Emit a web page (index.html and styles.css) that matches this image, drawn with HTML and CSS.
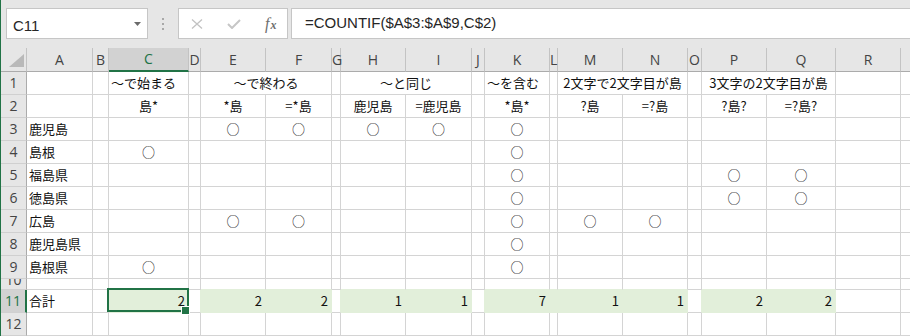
FILE: index.html
```html
<!DOCTYPE html>
<html lang="ja">

<head>
    <meta charset="UTF-8">
    <meta name="viewport" content="width=device-width, initial-scale=1.0">
    <title>COUNTIF</title>
    <link rel="stylesheet" href="styles.css">
</head>

<body>
    <div class="app">
        <!-- 数式バー -->
        <div class="fbar">
            <div class="namebox">
                <span>C11</span>
                <svg class="drop" width="7" height="4" viewBox="0 0 7 4"><polygon points="0,0 7,0 3.5,4" /></svg>
            </div>
            <svg class="grip" width="3" height="12" viewBox="0 0 3 12">
                <rect x="0" y="0" width="2" height="2" />
                <rect x="0" y="5" width="2" height="2" />
                <rect x="0" y="10" width="2" height="2" />
            </svg>
            <div class="fxbox">
                <svg class="btn-x" width="12" height="10" viewBox="0 0 12 10">
                    <path d="M1 0.5 L11 9.5 M11 0.5 L1 9.5" />
                </svg>
                <svg class="btn-ok" width="14" height="10" viewBox="0 0 14 10">
                    <polyline points="1,5 5,9 13,1" />
                </svg>
                <span class="fx"><i>f</i><i class="sx">x</i></span>
            </div>
            <div class="formula">=COUNTIF($A$3:$A$9,C$2)</div>
        </div>

        <!-- シート -->
        <table class="sheet">
            <colgroup>
                <col class="w-rh"><col class="w-a"><col class="w-b"><col class="w-c"><col class="w-d">
                <col class="w-e"><col class="w-f"><col class="w-g"><col class="w-h"><col class="w-i">
                <col class="w-j"><col class="w-k"><col class="w-l"><col class="w-m"><col class="w-n">
                <col class="w-o"><col class="w-p"><col class="w-q"><col class="w-r"><col class="w-s">
            </colgroup>
            <thead>
                <tr>
                    <th class="corner"><svg width="26" height="22" viewBox="0 0 26 22"><polygon points="23,5 23,18 8,18" /></svg></th>
                    <th>A</th><th>B</th><th class="selc">C</th><th>D</th><th>E</th><th>F</th><th>G</th><th>H</th><th>I</th>
                    <th>J</th><th>K</th><th>L</th><th>M</th><th>N</th><th>O</th><th>P</th><th>Q</th><th>R</th><th></th>
                </tr>
            </thead>
            <tbody>
                <tr><th class="rh">1</th><td></td><td></td><td>～で始まる</td><td></td><td colspan="2" class="ctr">～で終わる</td><td></td><td colspan="2" class="ctr">～と同じ</td><td></td><td>～を含む</td><td></td><td colspan="2" class="ctr">2文字で2文字目が島</td><td></td><td colspan="2" class="ctr">3文字の2文字目が島</td><td></td><td></td></tr>
                <tr><th class="rh">2</th><td></td><td></td><td class="ctr">島*</td><td></td><td class="ctr">*島</td><td class="ctr">=*島</td><td></td><td class="ctr">鹿児島</td><td class="ctr">=鹿児島</td><td></td><td class="ctr">*島*</td><td></td><td class="ctr">?島</td><td class="ctr">=?島</td><td></td><td class="ctr">?島?</td><td class="ctr">=?島?</td><td></td><td></td></tr>
                <tr><th class="rh">3</th><td>鹿児島</td><td></td><td></td><td></td><td class="mk">○</td><td class="mk">○</td><td></td><td class="mk">○</td><td class="mk">○</td><td></td><td class="mk">○</td><td></td><td></td><td></td><td></td><td></td><td></td><td></td><td></td></tr>
                <tr><th class="rh">4</th><td>島根</td><td></td><td class="mk">○</td><td></td><td></td><td></td><td></td><td></td><td></td><td></td><td class="mk">○</td><td></td><td></td><td></td><td></td><td></td><td></td><td></td><td></td></tr>
                <tr><th class="rh">5</th><td>福島県</td><td></td><td></td><td></td><td></td><td></td><td></td><td></td><td></td><td></td><td class="mk">○</td><td></td><td></td><td></td><td></td><td class="mk">○</td><td class="mk">○</td><td></td><td></td></tr>
                <tr><th class="rh">6</th><td>徳島県</td><td></td><td></td><td></td><td></td><td></td><td></td><td></td><td></td><td></td><td class="mk">○</td><td></td><td></td><td></td><td></td><td class="mk">○</td><td class="mk">○</td><td></td><td></td></tr>
                <tr><th class="rh">7</th><td>広島</td><td></td><td></td><td></td><td class="mk">○</td><td class="mk">○</td><td></td><td></td><td></td><td></td><td class="mk">○</td><td></td><td class="mk">○</td><td class="mk">○</td><td></td><td></td><td></td><td></td><td></td></tr>
                <tr><th class="rh">8</th><td>鹿児島県</td><td></td><td></td><td></td><td></td><td></td><td></td><td></td><td></td><td></td><td class="mk">○</td><td></td><td></td><td></td><td></td><td></td><td></td><td></td><td></td></tr>
                <tr><th class="rh">9</th><td>島根県</td><td></td><td class="mk">○</td><td></td><td></td><td></td><td></td><td></td><td></td><td></td><td class="mk">○</td><td></td><td></td><td></td><td></td><td></td><td></td><td></td><td></td></tr>
                <tr class="short"><th class="rh"><div class="cut"><span>10</span></div></th><td></td><td></td><td></td><td></td><td class="ab"></td><td class="ab"></td><td></td><td class="ab"></td><td class="ab"></td><td></td><td class="ab"></td><td class="ab"></td><td class="ab"></td><td class="ab"></td><td></td><td class="ab"></td><td class="ab"></td><td></td><td></td></tr>
                <tr><th class="rh selr">11</th><td>合計</td><td></td><td class="num fill sel">2</td><td class="gap"></td><td class="num fill">2</td><td class="num fill">2</td><td class="gap"></td><td class="num fill">1</td><td class="num fill">1</td><td class="gap"></td><td class="num fill">7</td><td class="fill"></td><td class="num fill">1</td><td class="num fill">1</td><td class="gap"></td><td class="num fill">2</td><td class="num fill">2</td><td></td><td></td></tr>
                <tr><th class="rh">12</th><td></td><td></td><td></td><td></td><td></td><td></td><td></td><td></td><td></td><td></td><td></td><td></td><td></td><td></td><td></td><td></td><td></td><td></td><td></td></tr>
                <tr><th class="rh">13</th><td></td><td></td><td></td><td></td><td></td><td></td><td></td><td></td><td></td><td></td><td></td><td></td><td></td><td></td><td></td><td></td><td></td><td></td><td></td></tr>
            </tbody>
        </table>
    </div>
</body>

</html>
```

FILE: styles.css
```css
* {
    box-sizing: border-box;
}

body {
    margin: 0;
    overflow: hidden;
    background: #ffffff;
    font-family: "Liberation Sans", Arial, sans-serif;
}

.app {
    height: 336px;
    overflow: hidden;
    border-left: 1px solid #217346;
}

/* 数式バー */
.fbar {
    display: flex;
    align-items: flex-start;
    height: 48px;
    padding: 8px 0 0 5px;
    background: #e6e6e6;
}

.namebox {
    display: flex;
    align-items: center;
    justify-content: space-between;
    width: 142px;
    height: 31px;
    padding: 3px 6px 0 6px;
    background: #ffffff;
    border: 1px solid #c6c6c6;
    font-size: 15px;
    color: #262626;
}

.drop {
    margin-top: -2px;
    fill: #6b6b6b;
}

.grip {
    margin: 10px 13px 0 14px;
    fill: #a8a8a8;
}

.fxbox {
    display: flex;
    align-items: center;
    width: 110px;
    height: 31px;
    padding-left: 12px;
    background: #ffffff;
    border: 1px solid #c6c6c6;
}

.btn-x {
    stroke: #c2c2c2;
    stroke-width: 1.3;
    fill: none;
}

.btn-ok {
    margin-left: 24px;
    stroke: #c6c6c6;
    stroke-width: 2;
    fill: none;
}

.fx {
    margin-left: 24px;
    font-family: "Liberation Serif", serif;
    color: #6e6e6e;
}

.fx i {
    font-size: 16px;
}

.fx .sx {
    margin-left: 1px;
    font-size: 12px;
    font-weight: bold;
}

.formula {
    flex: 1;
    height: 31px;
    margin-left: 3px;
    padding: 0 0 2px 13px;
    background: #ffffff;
    border: 1px solid #c6c6c6;
    border-right: none;
    font-size: 15px;
    line-height: 27px;
    color: #262626;
    white-space: nowrap;
}

/* シート */
.sheet {
    width: 920px;
    table-layout: fixed;
    border-collapse: separate;
    border-spacing: 0;
}

.w-rh { width: 26px; }
.w-a { width: 66px; }
.w-b { width: 16px; }
.w-c { width: 80px; }
.w-d { width: 12px; }
.w-e { width: 65px; }
.w-f { width: 66px; }
.w-g { width: 9px; }
.w-h { width: 65px; }
.w-i { width: 66px; }
.w-j { width: 13px; }
.w-k { width: 65px; }
.w-l { width: 8px; }
.w-m { width: 65px; }
.w-n { width: 65px; }
.w-o { width: 14px; }
.w-p { width: 65px; }
.w-q { width: 69px; }
.w-r { width: 65px; }
.w-s { width: 20px; }

.sheet tr {
    height: 23px;
}

.sheet tr.short {
    height: 11px;
}

.sheet th {
    padding: 0;
    background: #e6e6e6;
    font-family: "Open Sans", sans-serif;
    font-size: 14px;
    font-weight: normal;
    line-height: 22px;
    color: #444444;
    text-align: center;
    overflow: hidden;
}

.sheet thead th {
    overflow: visible;
    border-right: 1px solid #c3c3c3;
    border-bottom: 1px solid #ababab;
}

.sheet thead th.selc {
    background: #d2d2d2;
    border-bottom: 2px solid #217346;
    color: #217346;
}

.corner svg {
    display: block;
    fill: #b9b9b9;
}

.sheet th.rh {
    border-right: 1px solid #ababab;
    border-bottom: 1px solid #d0d0d0;
}

.sheet th.selr {
    background: #d2d2d2;
    border-right: 2px solid #217346;
    color: #217346;
}

.cut {
    height: 10px;
    overflow: hidden;
    line-height: 14px;
}

.cut span {
    display: block;
    margin-top: -6px;
}

.sheet td {
    padding: 0 2px;
    border-right: 1px solid #d4d4d4;
    border-bottom: 1px solid #d4d4d4;
    font-family: "Noto Sans CJK JP", sans-serif;
    font-size: 13px;
    line-height: 22px;
    color: #111111;
    white-space: nowrap;
    overflow: hidden;
}

.sheet td.ctr,
.sheet td.mk {
    text-align: center;
}

.sheet td.num {
    padding-right: 3px;
    text-align: right;
}

/* 合計行の塗りつぶし */
.sheet td.fill {
    background: #e2efda;
    border-color: #e2efda;
}

.sheet td.gap {
    border-right-color: #e2efda;
}

.sheet td.ab {
    border-bottom-color: #e2efda;
}

/* 選択セル */
.sheet td.sel {
    position: relative;
    overflow: visible;
}

.sheet td.sel::after {
    content: "";
    position: absolute;
    top: -2px;
    left: -2px;
    right: -1px;
    bottom: 0;
    border: 2px solid #217346;
}

.sheet td.sel::before {
    content: "";
    position: absolute;
    right: -2px;
    bottom: -3px;
    z-index: 1;
    width: 7px;
    height: 7px;
    background: #217346;
    border: 1px solid #ffffff;
}
```
